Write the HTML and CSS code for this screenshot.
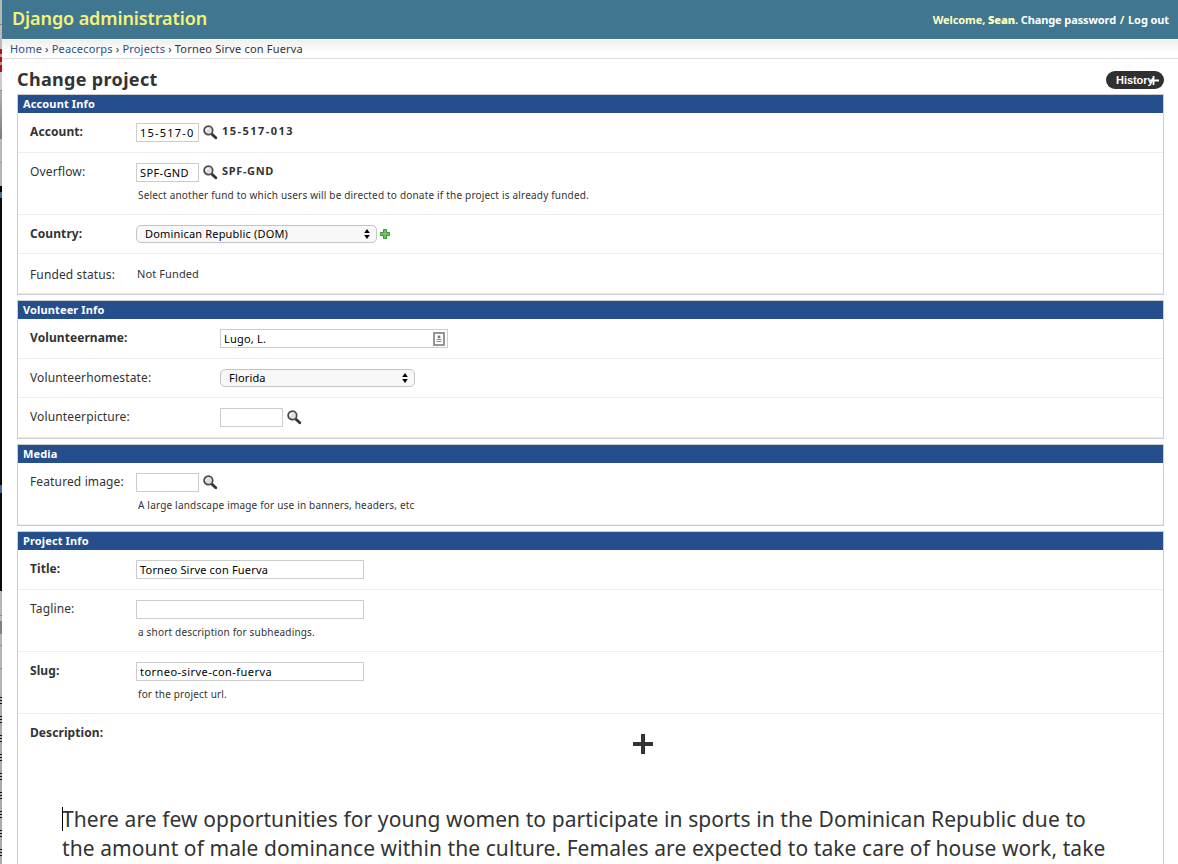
FILE: index.html
```
<!DOCTYPE html>
<html lang="en">
<head>
<meta charset="utf-8">
<title>Change project | Django administration</title>
<link rel="stylesheet" href="styles.css">
</head>
<body>
<svg class="defs" width="0" height="0" aria-hidden="true">
  <symbol id="lookup" viewBox="0 0 15 15">
    <path d="M9 9.2l3.8 3.6" stroke="#333" stroke-width="2.8" stroke-linecap="round"/>
    <circle cx="5.4" cy="5.4" r="4.3" fill="#dedede" stroke="#4a4a4a" stroke-width="1.7"/>
    <path d="M3.1 5.8a2.5 2.5 0 0 1 2.6-2.6" fill="none" stroke="#fff" stroke-width="1.3"/>
  </symbol>
  <symbol id="arrows" viewBox="0 0 6 10">
    <path d="M3 0l2.8 4H.2zM3 10L.2 6h5.6z" fill="#000"/>
  </symbol>
</svg>
<div class="desktop">
  <div class="behind">
    <div class="behind-top"></div>
    <div class="behind-red"></div>
    <div class="behind-tabs"></div>
    <div class="behind-dark"></div>
    <div class="behind-panel"></div>
    <div class="behind-lines"></div>
  </div>
  <div class="window">
    <header class="header">
      <div class="brand">Django administration</div>
      <nav class="user-tools"><span class="pale">Welcome, <b>Sean</b>.</span> <a>Change password</a> <span class="pale slash">/</span> <a>Log out</a></nav>
    </header>
    <nav class="breadcrumbs"><a>Home</a> › <a>Peacecorps</a> › <a>Projects</a> › Torneo Sirve con Fuerva</nav>
    <main class="content">
      <div class="title-row">
        <h1>Change project</h1>
        <a class="history"><span>History</span><svg width="9" height="9" viewBox="0 0 9 9"><path d="M3.5 0v9M0 4.5h9" stroke="#fff" stroke-width="1.8"/></svg></a>
      </div>

      <section class="module">
        <h2>Account Info</h2>
        <div class="row">
          <label class="required">Account:</label>
          <div class="field">
            <div class="line"><span class="input short digits">15-517-0</span><svg class="lookup"><use href="#lookup"/></svg><strong class="code">15-517-013</strong></div>
          </div>
        </div>
        <div class="row tall">
          <label>Overflow:</label>
          <div class="field">
            <div class="line"><span class="input short caps">SPF-GND</span><svg class="lookup"><use href="#lookup"/></svg><strong class="fund">SPF-GND</strong></div>
            <p class="help">Select another fund to which users will be directed to donate if the project is already funded.</p>
          </div>
        </div>
        <div class="row low">
          <label class="required">Country:</label>
          <div class="field">
            <div class="line"><span class="select country">Dominican Republic (DOM)<svg class="arrows"><use href="#arrows"/></svg></span><svg class="add" viewBox="0 0 10 10"><path d="M3.5.5h3v3h3v3h-3v3h-3v-3h-3v-3h3z" fill="#6fc25c" stroke="#3b9439"/></svg></div>
          </div>
        </div>
        <div class="row status">
          <label>Funded status:</label>
          <div class="field"><p class="readonly">Not Funded</p></div>
        </div>
      </section>

      <section class="module wide-labels">
        <h2>Volunteer Info</h2>
        <div class="row">
          <label class="required">Volunteername:</label>
          <div class="field">
            <div class="line"><span class="input long contact">Lugo, L.<svg width="12" height="14" viewBox="0 0 12 14"><rect x="1" y="1" width="10" height="12" fill="#fff" stroke="#8b8b8b" stroke-width="1.8"/><rect x="4.7" y="3.6" width="2.6" height="2.6" fill="#777"/><path d="M3.5 7.5h5M3.5 9.5h5" stroke="#888"/></svg></span></div>
          </div>
        </div>
        <div class="row low">
          <label>Volunteerhomestate:</label>
          <div class="field">
            <div class="line"><span class="select state">Florida<svg class="arrows"><use href="#arrows"/></svg></span></div>
          </div>
        </div>
        <div class="row last">
          <label>Volunteerpicture:</label>
          <div class="field"><div class="line"><span class="input short"></span><svg class="lookup"><use href="#lookup"/></svg></div></div>
        </div>
      </section>

      <section class="module">
        <h2>Media</h2>
        <div class="row tall">
          <label>Featured image:</label>
          <div class="field">
            <div class="line"><span class="input short"></span><svg class="lookup"><use href="#lookup"/></svg></div>
            <p class="help">A large landscape image for use in banners, headers, etc</p>
          </div>
        </div>
      </section>

      <section class="module">
        <h2>Project Info</h2>
        <div class="row">
          <label class="required">Title:</label>
          <div class="field"><div class="line"><span class="input long">Torneo Sirve con Fuerva</span></div></div>
        </div>
        <div class="row tall">
          <label>Tagline:</label>
          <div class="field">
            <div class="line"><span class="input long"></span></div>
            <p class="help">a short description for subheadings.</p>
          </div>
        </div>
        <div class="row tall">
          <label class="required">Slug:</label>
          <div class="field">
            <div class="line"><span class="input long slug">torneo-sirve-con-fuerva</span></div>
            <p class="help">for the project url.</p>
          </div>
        </div>
        <div class="row description">
          <label class="required">Description:</label>
          <div class="editor">
            <svg class="insert" width="20" height="20" viewBox="0 0 20 20"><path d="M10 0v20M0 10h20" stroke="#333" stroke-width="4"/></svg>
            <p class="prose">There are few opportunities for young women to participate in sports in the Dominican Republic due to<br>the amount of male dominance within the culture. Females are expected to take care of house work, take</p>
          </div>
        </div>
      </section>
    </main>
  </div>
</div>
</body>
</html>
```
FILE: styles.css
```
* { box-sizing: border-box; }
body {
  margin: 0;
  color: #333;
  background: #fff;
  font: 12px/19px "Noto Sans", "Open Sans", sans-serif;
}
h1, h2, p { margin: 0; }
svg { display: block; flex: none; }
.defs { position: absolute; }

.desktop { display: flex; height: 864px; overflow: hidden; }

/* Sliver of the windows lying behind this one */
.behind { display: flex; flex: none; flex-direction: column; width: 2px; }
.behind-top { height: 49px; background: linear-gradient(#b8b8b8 24px, #888 24px, #888 25px, #bbb 25px); }
.behind-red { height: 23px; background: linear-gradient(#a81616 5px, #d08a8a 5px, #d08a8a 8px, #a81616 8px, #a81616 13px, #d08a8a 13px, #d08a8a 16px, #a81616 16px); }
.behind-tabs { height: 114px; background: linear-gradient(#ccc 18px, #888 18px, #888 19px, #b0b0b0 19px, #7e7e7e 67px, #b8b8b8 67px, #b8b8b8 90px, #999 90px, #999 91px, #b5b5b5 91px); }
.behind-dark { height: 405px; background: linear-gradient(#000 6px, #3a6d94 6px, #3a6d94 12px, #0a0a0a 12px, #0a0a0a 299px, #41658c 299px, #41658c 307px, #0a0a0a 307px); }
.behind-panel { height: 104px; background: linear-gradient(#b5b5b5 24px, #888 24px, #888 25px, #b5b5b5 25px, #b5b5b5 30px, #808080 30px, #808080 43px, #b5b5b5 43px, #b5b5b5 54px, #888 54px, #888 55px, #b5b5b5 55px, #b5b5b5 77px, #888 77px, #888 78px, #b5b5b5 78px); }
.behind-lines { flex: 1; background: repeating-linear-gradient(#aaa 0, #aaa 2px, #111 2px, #111 3px, #b7af98 3px, #b7af98 5px, #111 5px, #111 6px, #b7af98 6px, #b7af98 8px, #111 8px, #111 9px, #aaa 9px, #aaa 19px); }

.window { flex: 1; min-width: 0; }

.header {
  display: flex;
  justify-content: space-between;
  height: 39px;
  padding: 0 9px 0 10px;
  background: #417690;
}
.brand {
  color: #f4f379;
  font-size: 18px;
  font-weight: 600;
  line-height: 37px;
  letter-spacing: -.1px;
}
.user-tools {
  color: #fff;
  font-size: 11px;
  font-weight: 700;
  line-height: 40px;
  letter-spacing: -.1px;
}
.pale { color: #ffffbf; }
.slash { margin: 0 1px; }

.breadcrumbs {
  height: 20px;
  padding-left: 8px;
  border-bottom: 1px solid #ddd;
  background: linear-gradient(#fff 1px, #efefef 1px, #fff 14px);
  font-size: 11px;
  line-height: 20px;
  letter-spacing: .19px;
}
.breadcrumbs a { color: #264f8c; }

.content { padding: 0 14px 0 15px; }
.title-row { display: flex; justify-content: space-between; height: 35px; padding-top: 12px; }
h1 { font-size: 18px; font-weight: 700; line-height: 16px; letter-spacing: .33px; }
.history {
  display: flex;
  align-items: center;
  width: 58px;
  height: 18px;
  padding-left: 10px;
  border-radius: 9px;
  background: #303030;
  color: #fff;
  font: bold 11px/18px "Liberation Sans", sans-serif;
}
.history span { width: 34px; letter-spacing: -.05px; }

.module { margin-bottom: 5px; border: 1px solid #ccc; }
.module h2 {
  height: 18px;
  padding-left: 5px;
  background: #244f8c;
  color: #fff;
  font-size: 11px;
  font-weight: 700;
  line-height: 18px;
  letter-spacing: .13px;
}
.row {
  display: flex;
  height: 40px;
  padding: 10px 12px 0;
  border-bottom: 1px solid #eee;
}
.row.low { height: 39px; }
.row.tall { height: 62px; }
.row label {
  flex: none;
  width: 106px;
  line-height: 18px;
  letter-spacing: .13px;
}
.wide-labels label { width: 190px; }
.row .required { font-weight: 700; letter-spacing: .08px; }
.status label { padding-top: 2px; }

.line { display: flex; height: 19px; }
.input {
  display: flex;
  align-items: center;
  justify-content: space-between;
  height: 19px;
  padding: 0 3px;
  border: 1px solid #ccc;
  background: #fff;
  color: #000;
  font-size: 11px;
  line-height: 17px;
  letter-spacing: .19px;
  white-space: nowrap;
}
.short { width: 63px; }
.long { width: 228px; }
.contact { padding-right: 2px; }
.digits { letter-spacing: 1.2px; }
.caps { letter-spacing: .38px; }
.slug { letter-spacing: .45px; }
.lookup { width: 15px; height: 15px; margin: 2px 0 0 4px; }
.line strong { font-size: 11px; line-height: 15px; }
.code { margin-left: 4px; letter-spacing: 1.45px; }
.fund { margin-left: 4px; letter-spacing: .65px; }
.help {
  padding: 6px 0 0 2px;
  font-size: 10px;
  line-height: 14px;
  letter-spacing: .19px;
}
.readonly { padding-left: 1px; font-size: 11px; line-height: 20px; letter-spacing: .11px; }

.select {
  display: flex;
  align-items: center;
  justify-content: space-between;
  height: 18px;
  padding: 0 6px 0 8px;
  border: 1px solid #c3c3c3;
  border-radius: 5px;
  background: #f8f8f8;
  color: #000;
  font-size: 11px;
  line-height: 16px;
  letter-spacing: .17px;
}
.country { width: 241px; }
.state { width: 195px; }
.arrows { width: 6px; height: 10px; }
.add { width: 10px; height: 10px; margin: 4px 0 0 3px; }

.row.description { flex-direction: column; height: 200px; }
.editor { display: flex; flex-direction: column; padding-left: 32px; }
.insert { margin: -8px 0 0 571px; }
.prose {
  position: relative;
  margin-top: 51px;
  font-size: 21px;
  line-height: 29px;
  letter-spacing: .08px;
  white-space: nowrap;
}
/* Text caret at the start of the description */
.prose::before {
  content: "";
  position: absolute;
  top: 2px;
  left: 0;
  width: 1px;
  height: 24px;
  background: #000;
}
```
